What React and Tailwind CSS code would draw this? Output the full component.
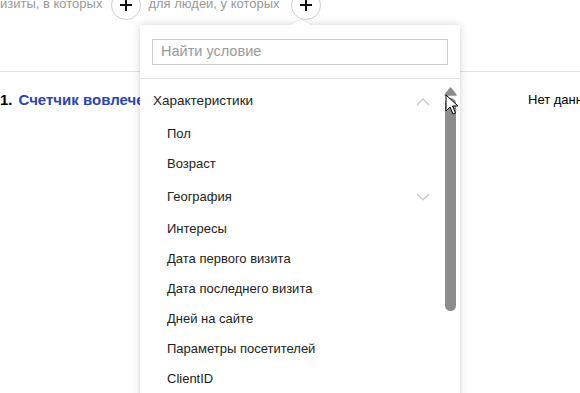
import React from "react";

const font = { fontFamily: '"Liberation Sans", Arial, sans-serif' };

function Plus() {
  return (
    <div className="w-[30px] h-[30px] rounded-full border border-[#d0d0d0] bg-white flex items-center justify-center shrink-0">
      <svg width="14" height="14" viewBox="0 0 14 14">
        <path d="M7 1v12M1 7h12" stroke="#111" strokeWidth="2" />
      </svg>
    </div>
  );
}

function ChevronUp() {
  return (
    <svg width="14" height="8" viewBox="0 0 14 8">
      <path d="M1 7l6-6 6 6" fill="none" stroke="#c4c4c4" strokeWidth="1.2" />
    </svg>
  );
}
function ChevronDown() {
  return (
    <svg width="14" height="8" viewBox="0 0 14 8">
      <path d="M1 1l6 6 6-6" fill="none" stroke="#c4c4c4" strokeWidth="1.2" />
    </svg>
  );
}

const items = [
  { t: "Характеристики", group: "up", top: true },
  { t: "Пол" },
  { t: "Возраст" },
  { t: "География", group: "down" },
  { t: "Интересы" },
  { t: "Дата первого визита" },
  { t: "Дата последнего визита" },
  { t: "Дней на сайте" },
  { t: "Параметры посетителей" },
  { t: "ClientID" },
  { t: "Технологии", group: "down", top: true },
];

export default function App() {
  return (
    <div className="relative w-[580px] h-[393px] overflow-hidden bg-white" style={font}>
      {/* page behind */}
      <div className="flex items-start mt-[-10px] h-[82px] border-b border-[#e2e2e2]">
        <span className="text-[13px] text-[#999] mt-[6px] leading-[16px] whitespace-nowrap">изиты, в которых</span>
        <div className="ml-[9px]"><Plus /></div>
        <span className="ml-[7px] text-[13px] text-[#999] mt-[6px] leading-[16px] whitespace-nowrap">для людей, у которых</span>
        <div className="ml-[11px]"><Plus /></div>
      </div>
      <div className="flex items-center h-[56px]">
        <div className="w-[528px] shrink-0 flex items-center overflow-hidden">
          <span className="text-[15px] font-bold text-black">1.</span>
          <span className="ml-[6px] text-[15px] font-bold text-[#2a45b3] whitespace-nowrap">Счетчик вовлечения пользователей</span>
        </div>
        <span className="text-[13px] text-black whitespace-nowrap">Нет данных</span>
      </div>

      {/* popup */}
      <div className="absolute left-[140px] top-[25px] w-[320px] h-[400px] bg-white shadow-[0_0_8px_rgba(0,0,0,0.18)]">
        <svg className="absolute left-[149px] top-[-7px]" width="24" height="8" viewBox="0 0 24 8">
          <path d="M0 7.5L12 1 24 7.5" fill="#fff" stroke="#e6e6e6" strokeWidth="1" />
          <rect x="0" y="7.2" width="24" height="2" fill="#fff" />
        </svg>
        <div className="px-[12px] pt-[14px] pb-[13px] border-b border-[#e4e4e4]">
          <div className="h-[26px] border border-[#ccc] flex items-center px-[8px]">
            <span className="text-[14.5px] text-[#999]">Найти условие</span>
          </div>
        </div>
        <div className="flex">
          <div className="flex-1 pt-[5px]">
            {items.map((it, i) =>
              it.group ? (
                <div
                  key={i}
                  className={
                    it.top
                      ? "h-[35px] flex items-center pl-[13px] pr-[14px]"
                      : "h-[35px] flex items-center pl-[27px] pr-[14px]"
                  }
                >
                  <span className={it.top ? "text-[13.5px] text-[#222]" : "text-[13px] text-[#222]"}>{it.t}</span>
                  <span className="ml-auto flex">{it.group === "up" ? <ChevronUp /> : <ChevronDown />}</span>
                </div>
              ) : (
                <div key={i} className="h-[30px] flex items-center pl-[27px]">
                  <span className="text-[13px] text-[#222]">{it.t}</span>
                </div>
              )
            )}
          </div>
          <div className="w-[12px] mr-[4px] pt-[8px] flex flex-col items-center">
            <svg width="13" height="9" viewBox="0 0 13 9">
              <path d="M6.5 1L12 8H1z" fill="#8c8c8c" stroke="#8c8c8c" strokeWidth="1.5" strokeLinejoin="round" />
            </svg>
            <div className="w-[11px] h-[213px] mt-[2px] rounded-full bg-[#8c8c8c]" />
          </div>
        </div>
      </div>

      {/* mouse cursor */}
      <svg className="absolute left-[445px] top-[94px]" width="14" height="22" viewBox="0 0 14 22">
        <path d="M1 1v16l4-4 3 7 2.5-1-3-7H13z" fill="#fff" stroke="#000" strokeWidth="1" strokeLinejoin="round" />
      </svg>
    </div>
  );
}
